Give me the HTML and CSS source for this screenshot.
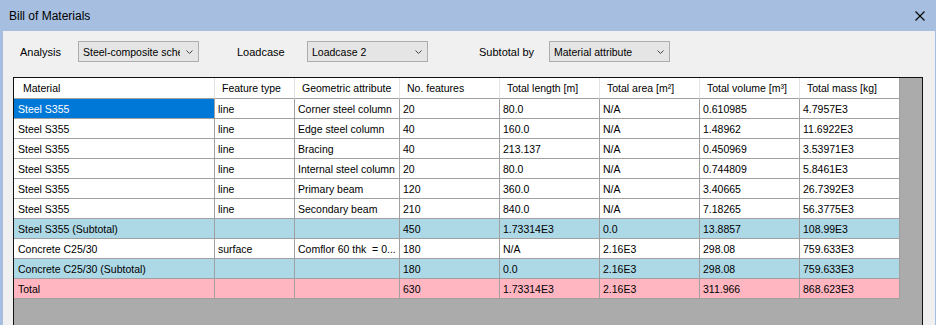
FILE: index.html
```html
<!DOCTYPE html>
<html lang="en">
<head>
    <meta charset="UTF-8">
    <meta name="viewport" content="width=device-width, initial-scale=1.0">
    <title>Bill of Materials</title>
    <link rel="stylesheet" href="styles.css">
</head>
<body>
    <div class="window">
        <div class="title-bar">
            <span class="title">Bill of Materials</span>
            <svg class="close-icon" width="10" height="10" viewBox="0 0 10 10">
                <path d="M0.5 0.5 L9.5 9.5 M9.5 0.5 L0.5 9.5" stroke="#000" stroke-width="1.1" fill="none"/>
            </svg>
        </div>

        <div class="content">
            <div class="toolbar">
                <span class="field-label label-analysis">Analysis</span>
                <div class="combo">
                    <span class="combo-text">Steel-composite scheme</span>
                    <svg class="combo-arrow" width="7" height="4" viewBox="0 0 7 4"><path d="M0.5 0.5 L3.5 3.5 L6.5 0.5" stroke="#444" fill="none"/></svg>
                </div>

                <span class="field-label label-loadcase">Loadcase</span>
                <div class="combo">
                    <span class="combo-text">Loadcase 2</span>
                    <svg class="combo-arrow" width="7" height="4" viewBox="0 0 7 4"><path d="M0.5 0.5 L3.5 3.5 L6.5 0.5" stroke="#444" fill="none"/></svg>
                </div>

                <span class="field-label label-subtotal">Subtotal by</span>
                <div class="combo">
                    <span class="combo-text">Material attribute</span>
                    <svg class="combo-arrow" width="7" height="4" viewBox="0 0 7 4"><path d="M0.5 0.5 L3.5 3.5 L6.5 0.5" stroke="#444" fill="none"/></svg>
                </div>
            </div>

            <div class="grid">
                <table class="bom-table">
                    <colgroup>
                        <col class="col-material">
                        <col class="col-feature">
                        <col class="col-geometric">
                        <col class="col-num">
                        <col class="col-num">
                        <col class="col-num">
                        <col class="col-num">
                        <col class="col-num">
                    </colgroup>
                    <thead>
                        <tr>
                            <th>Material</th>
                            <th>Feature type</th>
                            <th>Geometric attribute</th>
                            <th>No. features</th>
                            <th>Total length [m]</th>
                            <th>Total area [m²]</th>
                            <th>Total volume [m³]</th>
                            <th>Total mass [kg]</th>
                        </tr>
                    </thead>
                    <tbody>
                        <tr>
                            <td class="selected">Steel S355</td>
                            <td>line</td>
                            <td>Corner steel column</td>
                            <td>20</td>
                            <td>80.0</td>
                            <td>N/A</td>
                            <td>0.610985</td>
                            <td>4.7957E3</td>
                        </tr>
                        <tr>
                            <td>Steel S355</td>
                            <td>line</td>
                            <td>Edge steel column</td>
                            <td>40</td>
                            <td>160.0</td>
                            <td>N/A</td>
                            <td>1.48962</td>
                            <td>11.6922E3</td>
                        </tr>
                        <tr>
                            <td>Steel S355</td>
                            <td>line</td>
                            <td>Bracing</td>
                            <td>40</td>
                            <td>213.137</td>
                            <td>N/A</td>
                            <td>0.450969</td>
                            <td>3.53971E3</td>
                        </tr>
                        <tr>
                            <td>Steel S355</td>
                            <td>line</td>
                            <td>Internal steel column</td>
                            <td>20</td>
                            <td>80.0</td>
                            <td>N/A</td>
                            <td>0.744809</td>
                            <td>5.8461E3</td>
                        </tr>
                        <tr>
                            <td>Steel S355</td>
                            <td>line</td>
                            <td>Primary beam</td>
                            <td>120</td>
                            <td>360.0</td>
                            <td>N/A</td>
                            <td>3.40665</td>
                            <td>26.7392E3</td>
                        </tr>
                        <tr>
                            <td>Steel S355</td>
                            <td>line</td>
                            <td>Secondary beam</td>
                            <td>210</td>
                            <td>840.0</td>
                            <td>N/A</td>
                            <td>7.18265</td>
                            <td>56.3775E3</td>
                        </tr>
                        <tr class="subtotal-row">
                            <td>Steel S355 (Subtotal)</td>
                            <td></td>
                            <td></td>
                            <td>450</td>
                            <td>1.73314E3</td>
                            <td>0.0</td>
                            <td>13.8857</td>
                            <td>108.99E3</td>
                        </tr>
                        <tr>
                            <td>Concrete C25/30</td>
                            <td>surface</td>
                            <td>Comflor 60 thk&nbsp; = 0...</td>
                            <td>180</td>
                            <td>N/A</td>
                            <td>2.16E3</td>
                            <td>298.08</td>
                            <td>759.633E3</td>
                        </tr>
                        <tr class="subtotal-row">
                            <td>Concrete C25/30 (Subtotal)</td>
                            <td></td>
                            <td></td>
                            <td>180</td>
                            <td>0.0</td>
                            <td>2.16E3</td>
                            <td>298.08</td>
                            <td>759.633E3</td>
                        </tr>
                        <tr class="total-row">
                            <td>Total</td>
                            <td></td>
                            <td></td>
                            <td>630</td>
                            <td>1.73314E3</td>
                            <td>2.16E3</td>
                            <td>311.966</td>
                            <td>868.623E3</td>
                        </tr>
                    </tbody>
                </table>
            </div>
        </div>
    </div>
</body>
</html>
```

FILE: styles.css
```css
body {
    margin: 0;
    padding: 0;
    overflow: hidden;
    font-family: "Liberation Sans", Arial, sans-serif;
    color: #000;
}

.window {
    width: 936px;
    height: 325px;
    display: flex;
    flex-direction: column;
    background: #f0f0f0;
}

.title-bar {
    height: 31px;
    flex-shrink: 0;
    background: #a6bfe1;
    display: flex;
    align-items: center;
    justify-content: space-between;
    padding: 0 11px 0 9px;
}

.title {
    font-size: 12px;
}

.close-icon {
    display: block;
}

.content {
    flex: 1;
    min-height: 0;
    overflow: hidden;
    border-left: 3px solid #a6bfe1;
    border-right: 1px solid #a6bfe1;
    padding: 10px 12px 0 10px;
}

.toolbar {
    height: 21px;
    display: flex;
    align-items: center;
}

.field-label {
    font-size: 11px;
    flex-shrink: 0;
}

.label-analysis {
    margin-left: 7px;
    width: 58px;
}

.label-loadcase {
    margin-left: 38px;
    width: 70px;
}

.label-subtotal {
    margin-left: 51px;
    width: 70px;
}

.combo {
    width: 121px;
    height: 21px;
    box-sizing: border-box;
    flex-shrink: 0;
    display: flex;
    align-items: center;
    background: #e5e5e5;
    border: 1px solid #adadad;
    padding-left: 4px;
    font-size: 10.5px;
}

.combo-text {
    width: 97px;
    overflow: hidden;
    white-space: nowrap;
}

.combo-arrow {
    margin-left: 6px;
}

.grid {
    margin-top: 15px;
    height: 260px;
    background: #ababab;
    border: 1px solid #111;
}

.bom-table {
    border-collapse: separate;
    border-spacing: 0;
    table-layout: fixed;
    width: 886px;
    font-size: 10.5px;
}

.col-material {
    width: 201px;
}

.col-feature {
    width: 80px;
}

.col-geometric {
    width: 105px;
}

.col-num {
    width: 100px;
}

.bom-table th {
    height: 20px;
    padding: 0 0 0 7px;
    background: #fff;
    font-weight: normal;
    text-align: left;
    white-space: nowrap;
    overflow: hidden;
    border-right: 1px solid #e3e3e3;
    border-bottom: 1px solid #a0a0a0;
}

.bom-table th:first-child {
    padding-left: 9px;
}

.bom-table th:last-child {
    border-right-color: #a0a0a0;
}

.bom-table td {
    height: 19px;
    padding: 0 0 0 3px;
    background: #fff;
    white-space: nowrap;
    overflow: hidden;
    border-right: 1px solid #a0a0a0;
    border-bottom: 1px solid #a0a0a0;
}

.bom-table td:first-child {
    padding-left: 4px;
}

.bom-table td.selected {
    background: #0078d7;
    color: #fff;
}

.subtotal-row td {
    background: #add8e6;
}

.total-row td {
    background: #ffb6c1;
}
```
